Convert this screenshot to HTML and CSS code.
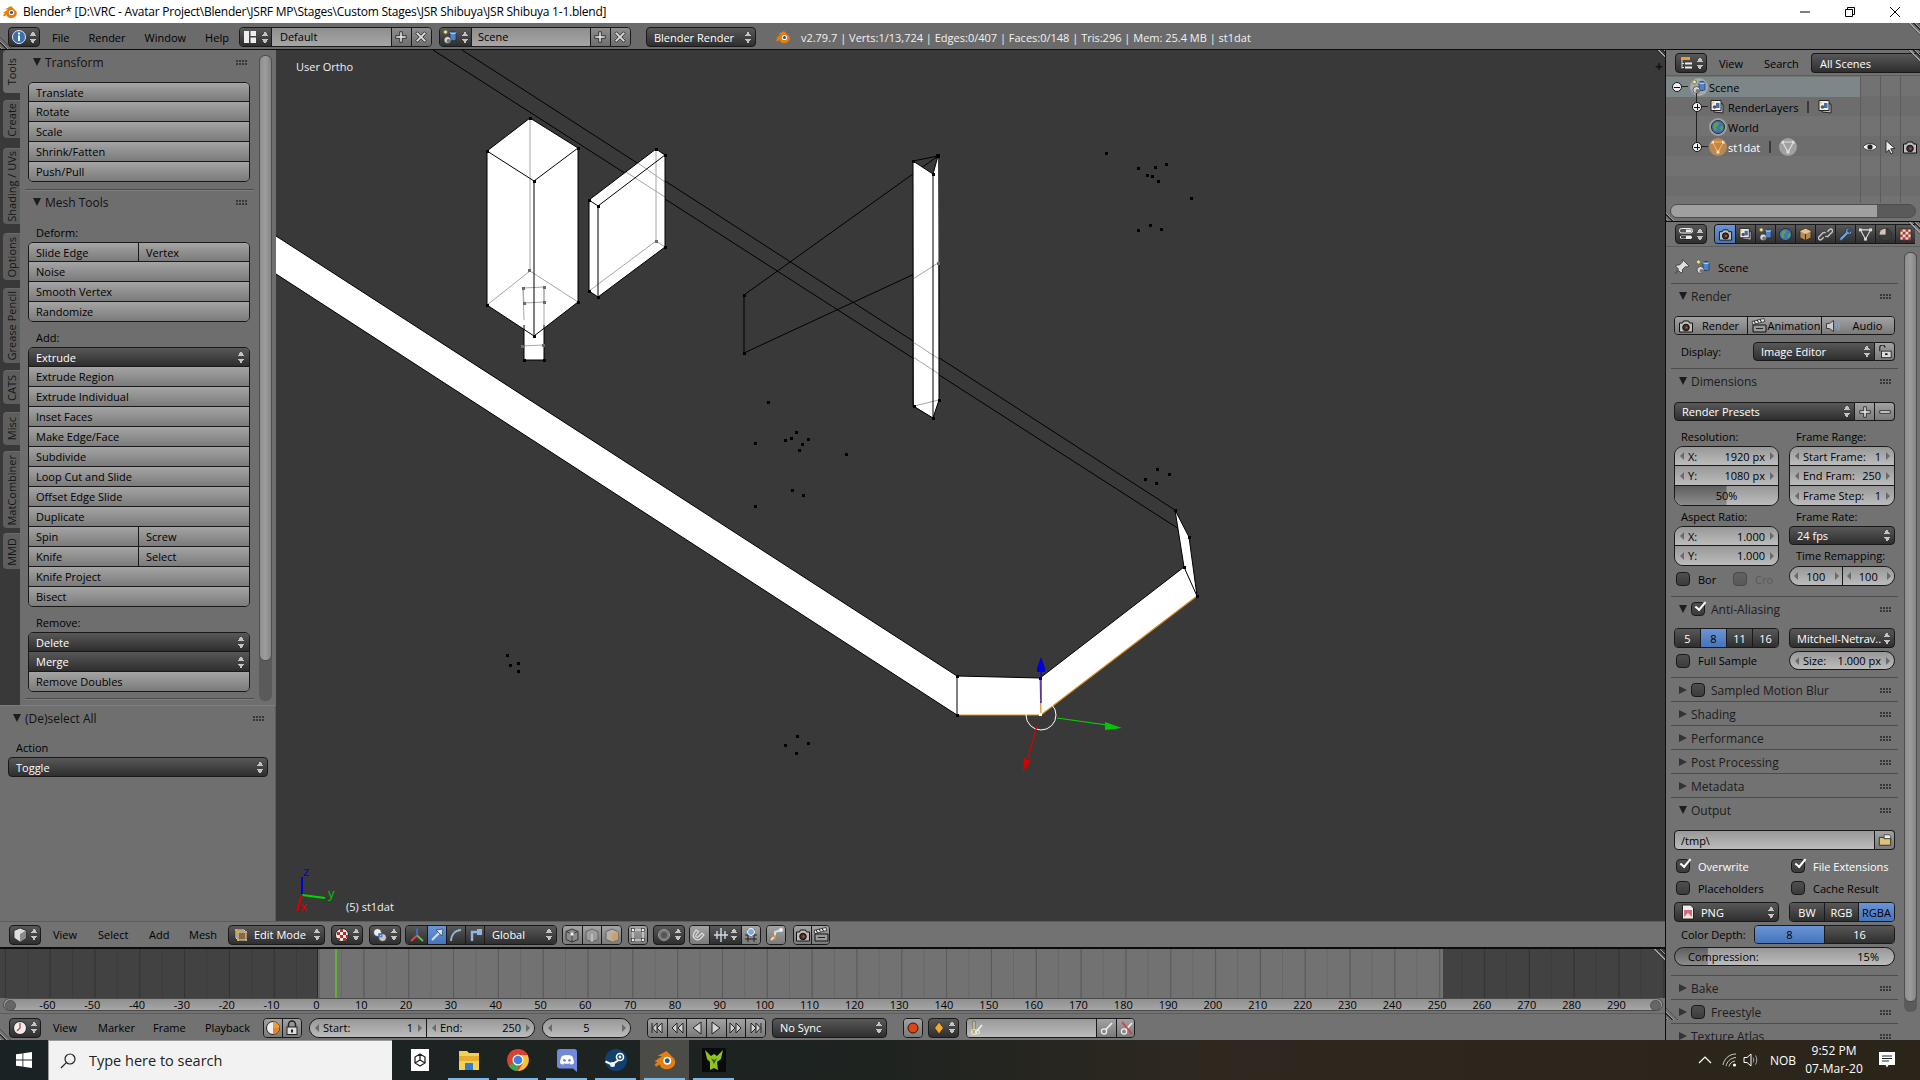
FILE: index.html
```html
<!DOCTYPE html>
<html lang="en">
<head>
    <meta charset="UTF-8">
    <title>Blender</title>
    <link rel="stylesheet" href="styles.css">
</head>
<body>

<svg class="icon-defs" width="0" height="0">
    <defs>
        <symbol id="i-blender" viewBox="0 0 16 16"><path d="M1 9l5-3.600-3-.1L9 2l1 1 4 4c1.500 2 1 5-2 6.500S5 14 4.500 11L2 12.500 1 11l2-1.500z" fill="#e87d0d"/><circle cx="9.500" cy="8.500" r="2.600" fill="#fff"/><circle cx="9.500" cy="8.500" r="1.600" fill="#265787"/></symbol>
        <symbol id="i-info" viewBox="0 0 16 16"><circle cx="8" cy="8" r="6.500" fill="#3a6fb0" stroke="#dfe8f2"/><rect x="7" y="6.500" width="2" height="5.500" fill="#fff"/><rect x="7" y="3.500" width="2" height="2" fill="#fff"/></symbol>
        <symbol id="i-layout" viewBox="0 0 16 16"><path d="M2 2h5v12H2zM8.500 2H14v5H8.500zM8.500 8.500H14V14H8.500z" fill="#eee"/></symbol>
        <symbol id="i-scene" viewBox="0 0 16 16"><circle cx="3.500" cy="3" r="2" fill="#f2e38c" stroke="#6a6a3c" stroke-width=".8"/><path d="M8 3.500c0-1.500 6-1.500 6 0v7c0 1.500-6 1.500-6 0z" fill="#4d83c7" stroke="#16243a" stroke-width=".6"/><path d="M8 3.500c0 1.500 6 1.500 6 0" fill="none" stroke="#bcd6f2"/><circle cx="5.500" cy="11" r="3.500" fill="#d8d8d8" stroke="#222" stroke-width=".6"/><circle cx="6.500" cy="12" r="2" fill="#777"/></symbol>
        <symbol id="i-plus" viewBox="0 0 16 16"><path d="M6.500 2h3v4.500H14v3H9.500V14h-3V9.500H2v-3h4.500z" fill="#ddd" stroke="#222"/></symbol>
        <symbol id="i-minus" viewBox="0 0 16 16"><path d="M2 6.500h12v3H2z" fill="#ddd" stroke="#222"/></symbol>
        <symbol id="i-x" viewBox="0 0 16 16"><path d="M4 2l4 4 4-4 2 2-4 4 4 4-2 2-4-4-4 4-2-2 4-4-4-4z" fill="#ddd" stroke="#222"/></symbol>
        <symbol id="i-cam" viewBox="0 0 16 16"><path d="M1.500 5h3l1-2h5l1 2h3v9h-13z" fill="#bdbdbd" stroke="#111"/><circle cx="8" cy="9.500" r="3.300" fill="#333" stroke="#111"/><circle cx="8.500" cy="9.500" r="1.200" fill="#d23b2e"/></symbol>
        <symbol id="i-outliner" viewBox="0 0 16 16"><path d="M3 2h9v3H3z" fill="#f09a30"/><path d="M4 5v8.500M4 8.500h2M4 12.500h2" stroke="#ddd" fill="none"/><path d="M7 7.500h7v2H7zM7 11.500h7v2H7z" fill="#eee"/></symbol>
        <symbol id="i-props" viewBox="0 0 16 16"><rect x="1.500" y="2.500" width="13" height="4.500" rx="2" fill="#555" stroke="#eee"/><rect x="8" y="3.500" width="5.500" height="2.500" fill="#eee"/><rect x="1.500" y="9" width="13" height="4.500" rx="2" fill="#eee" stroke="#222"/><rect x="3" y="10" width="5" height="2.500" fill="#444"/></symbol>
        <symbol id="i-layers" viewBox="0 0 16 16"><path d="M5 4l9 1v9l-9-1z" fill="#bbb" stroke="#222"/><path d="M2 1.500h10v10H2z" fill="#eee" stroke="#222"/><path d="M7 4h3.500v5H7z" fill="#3d6fb4"/><circle cx="5.500" cy="8" r="1.800" fill="#555"/><circle cx="4" cy="3.800" r="1" fill="#e7c94c"/></symbol>
        <symbol id="i-world" viewBox="0 0 16 16"><circle cx="8" cy="8" r="6.500" fill="#3f76b1" stroke="#1c2a3a"/><path d="M4 5c2-2 4-2 5-1l-1 3-2 1 1 3-2 1-2-4zM10 8l3-1 0 3-2 2z" fill="#5f9e4a"/></symbol>
        <symbol id="i-object" viewBox="0 0 16 16"><path d="M8 1.500l6 3v7l-6 3-6-3v-7z" fill="#b58a55" stroke="#332414"/><path d="M2 4.500l6 3 6-3-6-3z" fill="#e6c493"/><path d="M8 7.500v7" stroke="#332414"/></symbol>
        <symbol id="i-link" viewBox="0 0 16 16"><path d="M6 11L3.500 13.500A2 2 0 0 1 1.500 10L5 6.500c1-1 2.500-1 3 0M10 5l2.500-2.500A2 2 0 0 1 14.500 6L11 9.500c-1 1-2.500 1-3 0" fill="none" stroke="#c8c8c8" stroke-width="1.500"/></symbol>
        <symbol id="i-wrench" viewBox="0 0 16 16"><path d="M14.500 3.500L12 6l-2-2 2.500-2.500c-2.500-1-5 1-4.200 4L2 11.800c-1.200 1.500.7 3.300 2.200 2.200l6.300-6.300c3 .8 5-1.700 4-4.200z" fill="#6d9fd8" stroke="#1d2b3d" stroke-width=".7"/></symbol>
        <symbol id="i-mesh" viewBox="0 0 16 16"><path d="M2.500 3h11L8 13z" fill="none" stroke="#ddd" stroke-width="1.200"/><rect x="1" y="1.500" width="3" height="3" fill="#ddd"/><rect x="12" y="1.500" width="3" height="3" fill="#ddd"/><rect x="6.500" y="11.500" width="3" height="3" fill="#ddd"/></symbol>
        <symbol id="i-mesh-o" viewBox="0 0 16 16"><path d="M2.500 3h11L8 13z" fill="none" stroke="#e8760f" stroke-width="1.800"/><path d="M2.500 3h11L8 13z" fill="none" stroke="#fbe7c8" stroke-width=".6"/><rect x="1" y="1.500" width="3" height="3" fill="#f4e0c0"/><rect x="12" y="1.500" width="3" height="3" fill="#f4e0c0"/><rect x="6.500" y="11.500" width="3" height="3" fill="#f4e0c0"/></symbol>
        <symbol id="i-mat" viewBox="0 0 16 16"><circle cx="8" cy="8" r="6.500" fill="#a5776a" stroke="#222"/><path d="M8 1.500a6.500 6.500 0 0 1 0 13 6.500 6.500 0 0 1-6.500-6.500H8z" fill="#3b3b3b"/><path d="M1.500 8A6.500 6.500 0 0 1 8 1.500V8z" fill="#d6c4bc"/></symbol>
        <symbol id="i-tex" viewBox="0 0 16 16"><rect x="2" y="2" width="12" height="12" fill="#e8e0d8" stroke="#222"/><path d="M2 2h3v3H2zM8 2h3v3H8zM5 5h3v3H5zM11 5h3v3h-3zM2 8h3v3H2zM8 8h3v3H8zM5 11h3v3H5zM11 11h3v3h-3z" fill="#b03a2e"/></symbol>
        <symbol id="i-eye" viewBox="0 0 16 16"><path d="M1 8c3-4.500 11-4.500 14 0-3 4.500-11 4.500-14 0z" fill="#eee" stroke="#222" stroke-width=".7"/><circle cx="8" cy="8" r="2.600" fill="#222"/></symbol>
        <symbol id="i-cursor" viewBox="0 0 16 16"><path d="M4 1.500l9 8-4.200.3L11 14l-2 1-2-4.200L4 13.500z" fill="#eee" stroke="#111" stroke-width=".8"/></symbol>
        <symbol id="i-pin" viewBox="0 0 16 16"><path d="M9 1l6 6-2 1-1.500-.5-3 3 0 3-1.500.5-2.500-2.500L1.500 15 1 14.500l3.500-4.500L2 7.500l.5-1.500 3 0 3-3L8 1.500z" fill="#ddd" stroke="#222" stroke-width=".7"/></symbol>
        <symbol id="i-anim" viewBox="0 0 16 16"><path d="M2 7h13v7H2z" fill="#999" stroke="#111"/><path d="M1 3.500l12-3 .8 3-12 3z" fill="#eee" stroke="#111" stroke-width=".7"/><path d="M3 3l1.500 2.500M6 2l1.500 2.500M9 1.500l1.500 2.500" stroke="#111"/><path d="M5 10.500h7" stroke="#222"/></symbol>
        <symbol id="i-audio" viewBox="0 0 16 16"><path d="M1.500 5.500h3l4-3v11l-4-3h-3z" fill="#ccc" stroke="#222" stroke-width=".8"/><path d="M10.500 5.500c1.200 1.500 1.200 3.500 0 5M12.500 3.500c2.200 2.700 2.200 6.300 0 9" fill="none" stroke="#7ea6d6" stroke-width="1.100"/></symbol>
        <symbol id="i-lock" viewBox="0 0 16 16"><path d="M4.500 7V4.500a3.500 3.500 0 0 1 7 0V7" fill="none" stroke="#222" stroke-width="1.500"/><rect x="3" y="7" width="10" height="7.500" fill="#ddd" stroke="#222"/><rect x="7" y="9.500" width="2" height="3" fill="#222"/></symbol>
        <symbol id="i-unlock" viewBox="0 0 16 16"><path d="M2 7V3a3 3 0 0 1 6 0" fill="none" stroke="#222" stroke-width="1.300"/><rect x="4" y="7" width="11" height="7.500" fill="#ddd" stroke="#222"/><rect x="8" y="9.500" width="3" height="2" fill="#222"/></symbol>
        <symbol id="i-folder" viewBox="0 0 16 16"><path d="M7 2h6l1.500 2v4H7z" fill="#eee" stroke="#222" stroke-width=".8"/><path d="M1.500 5H6l1 1.500h7.500V14h-13z" fill="#d9c27a" stroke="#222"/></symbol>
        <symbol id="i-png" viewBox="0 0 16 16"><path d="M2.500 1h8l3 3v11h-11z" fill="#eee" stroke="#222"/><path d="M4 6h8v7H4z" fill="#d56a7d"/><path d="M4 13l4-4 4 4z" fill="#ffe2d6"/></symbol>
        <symbol id="i-cube" viewBox="0 0 16 16"><path d="M8 1l6 2.500V11l-6 4-6-4V3.500z" fill="#ddd" stroke="#222" stroke-width=".8"/><path d="M8 7v8l6-4V3.500z" fill="#8b8b8b"/></symbol>
        <symbol id="i-edit" viewBox="0 0 16 16"><path d="M3 3h8l2 2v8H5l-2-2z" fill="#8a6a3a" stroke="#ddd"/><path d="M3 3l2 2h8M5 5v8" stroke="#ddd" fill="none"/><path d="M2 2h2v2H2zM12 4h2v2h-2zM4 12h2v2H4zM12 12h2v2h-2zM4 4h2v2H4z" fill="#f5a52c"/></symbol>
        <symbol id="i-pivot" viewBox="0 0 16 16"><circle cx="8" cy="8" r="6.500" fill="#eee" stroke="#222"/><path d="M3 5h3v3H3zM6 2h3v3H6zM9 5h3v3H9zM6 8h3v3H6zM3 11h3v2H3zM9 11h3v3H9zM12 8h2v3h-2z" fill="#c5281f"/></symbol>
        <symbol id="i-shade" viewBox="0 0 16 16"><circle cx="5.500" cy="5.500" r="4" fill="#eee" stroke="#222" stroke-width=".7"/><circle cx="10.500" cy="10.500" r="4" fill="#c9c9c9" stroke="#222" stroke-width=".7"/><rect x="6.800" y="6.800" width="3" height="3" fill="none" stroke="#3a7ad0" stroke-width="1.200"/></symbol>
        <symbol id="i-axes" viewBox="0 0 16 16"><path d="M8 8.500V1.500" stroke="#3e6fe0" stroke-width="1.700"/><path d="M8 8.500L14 14" stroke="#6ac24a" stroke-width="1.700"/><path d="M8 8.500L2 14" stroke="#e0483c" stroke-width="1.700"/></symbol>
        <symbol id="i-move" viewBox="0 0 16 16"><path d="M3 13L11 5" stroke="#cfe0f6" stroke-width="2"/><path d="M14 2l-1 7-6-6z" fill="#cfe0f6" stroke="#16243a" stroke-width=".6"/></symbol>
        <symbol id="i-rot" viewBox="0 0 16 16"><path d="M3 14C3 8 7 3 13 3" fill="none" stroke="#8fb6e0" stroke-width="1.800"/></symbol>
        <symbol id="i-scale" viewBox="0 0 16 16"><path d="M5 14V5h6" fill="none" stroke="#8fb6e0" stroke-width="2.400"/><rect x="10" y="2" width="5" height="6" fill="#8fb6e0"/></symbol>
        <symbol id="i-vert" viewBox="0 0 16 16"><path d="M8 2l6 2.500v8L8 15l-6-2.500v-8z" fill="#8a8a8a" stroke="#222" stroke-width=".8"/><path d="M2 4.500L8 7l6-2.500M8 7v8" fill="none" stroke="#222" stroke-width=".7"/><rect x="6.500" y="5.500" width="3" height="3" fill="#eee"/></symbol>
        <symbol id="i-edge" viewBox="0 0 16 16"><path d="M8 2l6 2.500v8L8 15l-6-2.500v-8z" fill="#9d9d9d" stroke="#555" stroke-width=".8"/><path d="M8 7v8" stroke="#ddd"/></symbol>
        <symbol id="i-face" viewBox="0 0 16 16"><path d="M8 2l6 2.500v8L8 15l-6-2.500v-8z" fill="#b8b0a4" stroke="#555" stroke-width=".8"/><path d="M8 7v8l6-2.500v-8z" fill="#caa06c"/></symbol>
        <symbol id="i-occlude" viewBox="0 0 16 16"><rect x="3" y="3" width="10" height="10" fill="none" stroke="#eee"/><rect x="1.500" y="1.500" width="3" height="3" fill="#eee" stroke="#222" stroke-width=".6"/><rect x="11.500" y="1.500" width="3" height="3" fill="#eee" stroke="#222" stroke-width=".6"/><rect x="1.500" y="11.500" width="3" height="3" fill="#eee" stroke="#222" stroke-width=".6"/><rect x="11.500" y="11.500" width="3" height="3" fill="#eee" stroke="#222" stroke-width=".6"/></symbol>
        <symbol id="i-prop" viewBox="0 0 16 16"><circle cx="8" cy="8" r="5.500" fill="#777" stroke="#999"/><circle cx="8" cy="8" r="3" fill="#555"/></symbol>
        <symbol id="i-magnet" viewBox="0 0 16 16"><path d="M5 3L2.500 7c-1.500 3.500 3 7.500 6.500 5l4-4-2-2-4 4c-1.300 1-3-.5-2-2l2.500-3.500z" fill="none" stroke="#ddd" stroke-width="1.200"/></symbol>
        <symbol id="i-snap-inc" viewBox="0 0 16 16"><path d="M8 1v14M4 4v8M12 4v8M1 8h14" stroke="#cfd9e6" stroke-width="1.400"/></symbol>
        <symbol id="i-snap-el" viewBox="0 0 16 16"><path d="M2 8h12M2 12h12M5 2v13M11 2v13" stroke="#222"/><circle cx="8" cy="5" r="3.500" fill="#7aa9e0" stroke="#fff"/></symbol>
        <symbol id="i-parents" viewBox="0 0 16 16"><path d="M13 3L7 5v4L3 13" fill="none" stroke="#ddd" stroke-width="2"/><circle cx="13" cy="3" r="2" fill="#eee"/><path d="M3 9h4v4" fill="none" stroke="#d48b2e" stroke-width="1.500"/></symbol>
        <symbol id="i-clock" viewBox="0 0 16 16"><circle cx="8" cy="8" r="6.500" fill="#eee" stroke="#222"/><path d="M8 3v5l-3 3" fill="none" stroke="#c33" stroke-width="1.200"/></symbol>
        <symbol id="i-preview" viewBox="0 0 16 16"><circle cx="8" cy="8" r="6.500" fill="#eee" stroke="#222"/><path d="M8 8V1.500a6.500 6.500 0 0 1 6.500 6.500z" fill="#f09a30"/><path d="M8 8h6.500A6.500 6.500 0 0 1 8 14.500z" fill="#e8822a"/></symbol>
        <symbol id="i-key" viewBox="0 0 16 16"><circle cx="5" cy="11.500" r="2.600" fill="none" stroke="#eee" stroke-width="1.300"/><path d="M7 9.500L13 3" stroke="#eee" stroke-width="1.800"/></symbol>
        <symbol id="i-key-x" viewBox="0 0 16 16"><circle cx="5" cy="11.500" r="2.600" fill="none" stroke="#eee" stroke-width="1.300"/><path d="M7 9.500L13 3" stroke="#eee" stroke-width="1.800"/><path d="M3 2l10 12" stroke="#d63a3a" stroke-width="1.500"/></symbol>
        <symbol id="i-key-set" viewBox="0 0 16 16"><path d="M4 1h2v9H4z" fill="#efe3a0" stroke="#333" stroke-width=".5"/><circle cx="5" cy="12" r="2.500" fill="none" stroke="#efe3a0" stroke-width="1.200"/><path d="M8 11l5-6" stroke="#eee" stroke-width="1.800"/><circle cx="8.500" cy="12" r="2" fill="none" stroke="#eee"/></symbol>
        <symbol id="i-diamond" viewBox="0 0 16 16"><path d="M8 2l4.500 6L8 14 3.500 8z" fill="#f2a826" stroke="#222" stroke-width=".7"/></symbol>
        <symbol id="i-rec" viewBox="0 0 16 16"><circle cx="8" cy="8" r="5" fill="#dd4713" stroke="#3a1306"/></symbol>
        <symbol id="i-start" viewBox="0 0 16 16"><path d="M3 3v10M13 3L8 8l5 5zM8 3L3.500 8 8 13z" fill="#d4d4d4" stroke="#222"/></symbol>
        <symbol id="i-prev" viewBox="0 0 16 16"><path d="M8 3L3 8l5 5zM14 3L9 8l5 5z" fill="#d4d4d4" stroke="#222"/></symbol>
        <symbol id="i-rev" viewBox="0 0 16 16"><path d="M12 2L4 8l8 6z" fill="#d4d4d4" stroke="#222"/></symbol>
        <symbol id="i-play" viewBox="0 0 16 16"><path d="M4 2l8 6-8 6z" fill="#d4d4d4" stroke="#222"/></symbol>
        <symbol id="i-next" viewBox="0 0 16 16"><path d="M2 3l5 5-5 5zM8 3l5 5-5 5z" fill="#d4d4d4" stroke="#222"/></symbol>
        <symbol id="i-end" viewBox="0 0 16 16"><path d="M13 3v10M3 3l5 5-5 5zM8 3l4.500 5L8 13z" fill="#d4d4d4" stroke="#222"/></symbol>
    </defs>
</svg>

<div class="titlebar">
    <svg class="ico title-logo"><use href="#i-blender"/></svg>
    <span class="title-text">Blender* [D:\VRC - Avatar Project\Blender\JSRF MP\Stages\Custom Stages\JSR Shibuya\JSR Shibuya 1-1.blend]</span>
    <div class="win-btns">
        <svg class="win-ico" viewBox="0 0 12 12"><path d="M1 6h10" stroke="#000" fill="none"/></svg>
        <svg class="win-ico" viewBox="0 0 12 12"><path d="M1.500 3.500h7v7h-7zM3.500 3.500v-2h7v7h-2" stroke="#000" fill="none"/></svg>
        <svg class="win-ico" viewBox="0 0 12 12"><path d="M1 1l10 10M11 1L1 11" stroke="#000" fill="none"/></svg>
    </div>
</div>

<div class="infobar">
    <div class="bt-dark icon-drop ib-editor"><svg class="ico"><use href="#i-info"/></svg><span class="ud"></span></div>
    <nav class="menu ib-menu"><span>File</span><span>Render</span><span>Window</span><span>Help</span></nav>
    <div class="id-block ib-layout">
        <div class="bt-dark icon-drop"><svg class="ico"><use href="#i-layout"/></svg><span class="ud"></span></div>
        <div class="id-name">Default</div>
        <div class="id-cell"><svg class="ico"><use href="#i-plus"/></svg></div>
        <div class="id-cell"><svg class="ico"><use href="#i-x"/></svg></div>
    </div>
    <div class="id-block ib-scene">
        <div class="bt-dark icon-drop"><svg class="ico"><use href="#i-scene"/></svg><span class="ud"></span></div>
        <div class="id-name id-name-wide">Scene</div>
        <div class="id-cell"><svg class="ico"><use href="#i-plus"/></svg></div>
        <div class="id-cell"><svg class="ico"><use href="#i-x"/></svg></div>
    </div>
    <div class="bt-dark drop ib-engine"><span>Blender Render</span><span class="ud"></span></div>
    <svg class="ico ib-logo"><use href="#i-blender"/></svg>
    <span class="ib-stats">v2.79.7 | Verts:1/13,724 | Edges:0/407 | Faces:0/148 | Tris:296 | Mem: 25.4 MB | st1dat</span>
    <span class="hatch hatch-tr"></span>
    <span class="hatch hatch-bl"></span>
</div>

<div class="workspace">
    <div class="main-col">
        <div class="view3d">
            <aside class="tool-region">
                <div class="tool-upper">
                    <div class="tabs">
                        <div class="tab tab-on tab-tools"><span>Tools</span></div>
                        <div class="tab tab-create"><span>Create</span></div>
                        <div class="tab tab-shading"><span>Shading / UVs</span></div>
                        <div class="tab tab-options"><span>Options</span></div>
                        <div class="tab tab-grease"><span>Grease Pencil</span></div>
                        <div class="tab tab-cats"><span>CATS</span></div>
                        <div class="tab tab-misc"><span>Misc</span></div>
                        <div class="tab tab-mat"><span>MatCombiner</span></div>
                        <div class="tab tab-mmd"><span>MMD</span></div>
                    </div>
                    <div class="tool-panels">
                        <div class="p-head t-head"><i class="tri-down"></i>Transform<b class="grip"></b></div>
                        <div class="stack t-first">
                            <div class="bt">Translate</div>
                            <div class="bt">Rotate</div>
                            <div class="bt">Scale</div>
                            <div class="bt">Shrink/Fatten</div>
                            <div class="bt">Push/Pull</div>
                        </div>
                        <div class="t-divider"></div>
                        <div class="p-head t-head"><i class="tri-down"></i>Mesh Tools<b class="grip"></b></div>
                        <div class="t-label t-label-first">Deform:</div>
                        <div class="stack">
                            <div class="bt-row">
                                <div class="bt half">Slide Edge</div>
                                <div class="bt">Vertex</div>
                            </div>
                            <div class="bt">Noise</div>
                            <div class="bt">Smooth Vertex</div>
                            <div class="bt">Randomize</div>
                        </div>
                        <div class="t-label">Add:</div>
                        <div class="stack">
                            <div class="bt bt-menu">Extrude<span class="ud"></span></div>
                            <div class="bt">Extrude Region</div>
                            <div class="bt">Extrude Individual</div>
                            <div class="bt">Inset Faces</div>
                            <div class="bt">Make Edge/Face</div>
                            <div class="bt">Subdivide</div>
                            <div class="bt">Loop Cut and Slide</div>
                            <div class="bt">Offset Edge Slide</div>
                            <div class="bt">Duplicate</div>
                            <div class="bt-row">
                                <div class="bt half">Spin</div>
                                <div class="bt">Screw</div>
                            </div>
                            <div class="bt-row">
                                <div class="bt half">Knife</div>
                                <div class="bt">Select</div>
                            </div>
                            <div class="bt">Knife Project</div>
                            <div class="bt">Bisect</div>
                        </div>
                        <div class="t-label">Remove:</div>
                        <div class="stack">
                            <div class="bt bt-menu">Delete<span class="ud"></span></div>
                            <div class="bt bt-menu">Merge<span class="ud"></span></div>
                            <div class="bt">Remove Doubles</div>
                        </div>
                        <div class="t-divider t-divider-end"></div>
                    </div>
                    <div class="tool-scroll"><div class="tool-thumb"></div></div>
                </div>
                <div class="op-panel">
                    <div class="p-head op-head"><i class="tri-down"></i>(De)select All<b class="grip"></b></div>
                    <div class="op-label">Action</div>
                    <div class="bt-dark drop op-toggle"><span>Toggle</span><span class="ud"></span></div>
                </div>
            </aside>

            <div class="viewport">
                <svg class="scene-svg" viewBox="276 50 1389 871" width="1389" height="871">
                    <g class="edges">
                        <path d="M433 50L1179 529M462 50L1175 510M744 295L938 156M744 295V353L938 263"/>
                    </g>
                    <g class="faces">
                        <path d="M530 118L578 148V302L534 336L487 305V151Z"/>
                        <path d="M524 320H544V360H524Z"/>
                        <path d="M656 149L665 155V247L598 297L589 291V200Z"/>
                        <path d="M913 161L933 174L938 156L939 400L933 418L914 406Z"/>
                        <path d="M276 236L957 676L1040 678L1184 567L1197 596L1041 715H957L276 274Z"/>
                        <path d="M1175 510L1189 537L1197 596L1184 567Z"/>
                    </g>
                    <g class="back-edges">
                        <path d="M530 118V271M487 305L530 271L578 302M656 149V241M589 291L656 241L665 247"/>
                        <path d="M523 288L544 287L544 302L524 303ZM523 288L524 320M544 287V325M522 346L543 345"/>
                        <path d="M626 172L665 197M638 163L665 182M913 357L939 374M913 342L939 359M913 279L938 263M914 406L939 400"/>
                    </g>
                    <g class="edges">
                        <path d="M530 118L578 148L534 181L487 151ZM534 181V336M487 151V305L534 336L578 302V148"/>
                        <path d="M524 325V360H544V325"/>
                        <path d="M656 149L665 155L598 206L589 200ZM598 206V297L589 291V200M598 297L665 247V155"/>
                        <path d="M913 161L938 156L933 174ZM913 161V406L933 418V174M933 418L939 400V263"/>
                        <path d="M276 236L957 676M276 274L957 715M957 676V715M957 676L1040 678L1184 567M1175 510L1189 537L1197 596L1184 567L1175 510"/>
                    </g>
                    <g class="selected">
                        <path d="M957 715H1041L1197 596M1040 678L1041 715"/>
                    </g>
                    <g class="verts">
                        <path d="M529 117h3v3h-3zM577 147h3v3h-3zM533 180h3v3h-3zM486 150h3v3h-3zM486 304h3v3h-3zM577 301h3v3h-3zM533 335h3v3h-3zM523 359h3v3h-3zM543 359h3v3h-3zM655 148h3v3h-3zM664 154h3v3h-3zM588 199h3v3h-3zM597 205h3v3h-3zM597 296h3v3h-3zM588 290h3v3h-3zM664 246h3v3h-3zM912 160h3v3h-3zM936 154h4v4h-4zM932 173h3v3h-3zM913 405h3v3h-3zM938 399h3v3h-3zM932 417h3v3h-3zM743 294h3v3h-3zM743 352h3v3h-3zM956 675h3v3h-3zM956 714h3v3h-3zM1039 677h3v3h-3zM1174 509h3v3h-3zM1188 536h3v3h-3zM1196 595h3v3h-3zM1183 566h3v3h-3z"/>
                        <path d="M1105 152h3v3h-3zM1137 167h3v3h-3zM1146 174h3v3h-3zM1154 166h3v3h-3zM1165 163h3v3h-3zM1157 180h3v3h-3zM1151 175h3v3h-3zM1190 197h3v3h-3zM1137 229h3v3h-3zM1149 224h3v3h-3zM1160 228h3v3h-3z"/>
                        <path d="M767 401h3v3h-3zM754 442h3v3h-3zM784 439h3v3h-3zM790 437h3v3h-3zM795 431h3v3h-3zM798 449h3v3h-3zM801 443h3v3h-3zM807 438h3v3h-3zM845 453h3v3h-3zM791 489h3v3h-3zM802 494h3v3h-3zM754 505h3v3h-3z"/>
                        <path d="M1144 478h3v3h-3zM1156 468h3v3h-3zM1155 482h3v3h-3zM1168 473h3v3h-3z"/>
                        <path d="M506 654h3v3h-3zM509 664h3v3h-3zM517 662h3v3h-3zM517 670h3v3h-3z"/>
                        <path d="M796 735h3v3h-3zM784 744h3v3h-3zM807 742h3v3h-3zM795 752h3v3h-3z"/>
                    </g>
                    <g class="back-verts">
                        <path d="M528 269h3v3h-3zM522 287h3v3h-3zM543 286h3v3h-3zM523 302h3v3h-3zM543 301h3v3h-3zM521 345h3v3h-3zM542 344h3v3h-3zM655 240h3v3h-3zM937 262h3v3h-3z"/>
                    </g>
                    <circle class="gizmo-ring" cx="1041" cy="715" r="15"/>
                    <path class="gizmo-b" d="M1041 703V668"/>
                    <path class="gizmo-fb" d="M1041 657L1045 668L1045 672H1037V668Z"/>
                    <path class="gizmo-g" d="M1057 718L1107 725"/>
                    <path class="gizmo-fg" d="M1122 728L1105 722L1105 730Z"/>
                    <path class="gizmo-r" d="M1037 726L1028 758"/>
                    <path class="gizmo-fr" d="M1023 772L1024 758L1031 761Z"/>
                    <rect class="gizmo-dot" x="1039" y="713" width="3" height="3"/>
                    <path class="axis-b" d="M302 895V877"/>
                    <path class="axis-g" d="M302 895L325 898"/>
                    <path class="axis-r" d="M302 895L297 911"/>
                    <text class="axis-tb" x="303" y="876">z</text>
                    <text class="axis-tg" x="328" y="898">y</text>
                    <text class="axis-tr" x="300" y="911">x</text>
                </svg>
                <span class="view-name">User Ortho</span>
                <span class="view-obj">(5) st1dat</span>
                <b class="view-plus">+</b>
                <span class="hatch hatch-tr"></span>
            </div>
        </div>

        <div class="view-header">
            <div class="bt-dark icon-drop h-editor"><svg class="ico"><use href="#i-cube"/></svg><span class="ud"></span></div>
            <nav class="menu h-menu"><span>View</span><span>Select</span><span>Add</span><span>Mesh</span></nav>
            <div class="bt-dark drop h-mode"><svg class="ico"><use href="#i-edit"/></svg><span class="drop-text">Edit Mode</span><span class="ud"></span></div>
            <div class="bt-dark icon-drop h-pivot"><svg class="ico"><use href="#i-pivot"/></svg><span class="ud"></span></div>
            <div class="bt-dark icon-drop h-shade"><svg class="ico"><use href="#i-shade"/></svg><span class="ud"></span></div>
            <div class="cells h-manip">
                <div class="cell cell-d cell-axes"><svg class="ico"><use href="#i-axes"/></svg></div>
                <div class="cell cell-on"><svg class="ico"><use href="#i-move"/></svg></div>
                <div class="cell cell-d"><svg class="ico"><use href="#i-rot"/></svg></div>
                <div class="cell cell-d"><svg class="ico"><use href="#i-scale"/></svg></div>
                <div class="cell cell-d cell-global"><span>Global</span><span class="ud"></span></div>
            </div>
            <div class="cells h-select">
                <div class="cell"><svg class="ico"><use href="#i-vert"/></svg></div>
                <div class="cell"><svg class="ico"><use href="#i-edge"/></svg></div>
                <div class="cell"><svg class="ico"><use href="#i-face"/></svg></div>
            </div>
            <div class="cells h-occl"><div class="cell"><svg class="ico"><use href="#i-occlude"/></svg></div></div>
            <div class="bt-dark icon-drop h-prop"><svg class="ico"><use href="#i-prop"/></svg><span class="ud"></span></div>
            <div class="cells h-snap">
                <div class="cell"><svg class="ico"><use href="#i-magnet"/></svg></div>
                <div class="cell cell-d cell-inc"><svg class="ico"><use href="#i-snap-inc"/></svg><span class="ud"></span></div>
                <div class="cell"><svg class="ico"><use href="#i-snap-el"/></svg></div>
            </div>
            <div class="cells h-parent"><div class="cell"><svg class="ico"><use href="#i-parents"/></svg></div></div>
            <div class="cells h-gl">
                <div class="cell"><svg class="ico"><use href="#i-cam"/></svg></div>
                <div class="cell"><svg class="ico"><use href="#i-anim"/></svg></div>
            </div>
        </div>

        <div class="timeline">
            <div class="tl-grid">
                <div class="tl-out tl-before"></div>
                <div class="tl-out tl-after"></div>
                <div class="tl-frame"></div>
                <span class="hatch hatch-tr"></span>
            </div>
            <div class="ruler">
                <span>-60</span><span>-50</span><span>-40</span><span>-30</span><span>-20</span><span>-10</span>
                <span>0</span><span>10</span><span>20</span><span>30</span><span>40</span><span>50</span>
                <span>60</span><span>70</span><span>80</span><span>90</span><span>100</span><span>110</span>
                <span>120</span><span>130</span><span>140</span><span>150</span><span>160</span><span>170</span>
                <span>180</span><span>190</span><span>200</span><span>210</span><span>220</span><span>230</span>
                <span>240</span><span>250</span><span>260</span><span>270</span><span>280</span><span>290</span>
            </div>
        </div>

        <div class="tl-footer">
            <div class="bt-dark icon-drop h-editor"><svg class="ico"><use href="#i-clock"/></svg><span class="ud"></span></div>
            <nav class="menu f-menu"><span>View</span><span>Marker</span><span>Frame</span><span>Playback</span></nav>
            <div class="cells f-preview">
                <div class="cell"><svg class="ico"><use href="#i-preview"/></svg></div>
                <div class="cell"><svg class="ico"><use href="#i-lock"/></svg></div>
            </div>
            <div class="num-pair f-range">
                <div class="num num-start"><i class="al"></i><span>Start:</span><span class="num-val">1</span><i class="ar"></i></div>
                <div class="num num-end"><i class="al"></i><span>End:</span><span class="num-val">250</span><i class="ar"></i></div>
            </div>
            <div class="num-pair f-current">
                <div class="num num-one"><i class="al"></i><span class="num-mid">5</span><i class="ar"></i></div>
            </div>
            <div class="cells f-transport">
                <div class="cell"><svg class="ico"><use href="#i-start"/></svg></div>
                <div class="cell"><svg class="ico"><use href="#i-prev"/></svg></div>
                <div class="cell"><svg class="ico"><use href="#i-rev"/></svg></div>
                <div class="cell"><svg class="ico"><use href="#i-play"/></svg></div>
                <div class="cell"><svg class="ico"><use href="#i-next"/></svg></div>
                <div class="cell"><svg class="ico"><use href="#i-end"/></svg></div>
            </div>
            <div class="bt-dark drop f-sync"><span>No Sync</span><span class="ud"></span></div>
            <div class="cells f-rec"><div class="cell"><svg class="ico"><use href="#i-rec"/></svg></div></div>
            <div class="bt-dark icon-drop f-keytype"><svg class="ico"><use href="#i-diamond"/></svg><span class="ud"></span></div>
            <div class="cells f-keys">
                <div class="cell cell-keyset"><svg class="ico"><use href="#i-key-set"/></svg></div>
                <div class="cell"><svg class="ico"><use href="#i-key"/></svg></div>
                <div class="cell"><svg class="ico"><use href="#i-key-x"/></svg></div>
            </div>
            <span class="hatch hatch-bl"></span>
        </div>
    </div>

    <div class="side-col">
        <div class="outliner">
            <div class="out-head">
                <div class="bt-dark icon-drop"><svg class="ico"><use href="#i-outliner"/></svg><span class="ud"></span></div>
                <nav class="menu out-menu"><span>View</span><span>Search</span></nav>
                <div class="bt-dark out-scenes"><span>All Scenes</span></div>
                <span class="hatch hatch-tr"></span>
            </div>
            <div class="out-list">
                <div class="out-cols"><i></i><i></i><i></i></div>
                <div class="out-row out-row-sel">
                    <i class="exp exp-minus"></i>
                    <svg class="ico ico-ring"><use href="#i-scene"/></svg>
                    <span>Scene</span>
                </div>
                <div class="out-tree"></div>
                <div class="out-row out-row-2">
                    <i class="exp"></i>
                    <svg class="ico"><use href="#i-layers"/></svg>
                    <span>RenderLayers</span>
                    <b class="out-sep"></b>
                    <svg class="ico"><use href="#i-layers"/></svg>
                </div>
                <div class="out-row out-row-3">
                    <svg class="ico ico-ring"><use href="#i-world"/></svg>
                    <span>World</span>
                </div>
                <div class="out-row out-row-2 out-row-obj">
                    <i class="exp"></i>
                    <svg class="ico ico-ring-o"><use href="#i-mesh-o"/></svg>
                    <span class="out-active">st1dat</span>
                    <b class="out-sep"></b>
                    <svg class="ico ico-ring-g"><use href="#i-mesh"/></svg>
                    <div class="out-restrict">
                        <svg class="ico"><use href="#i-eye"/></svg>
                        <svg class="ico"><use href="#i-cursor"/></svg>
                        <svg class="ico"><use href="#i-cam"/></svg>
                    </div>
                </div>
            </div>
            <div class="out-scroll"><div class="out-thumb"></div><span class="hatch hatch-bl"></span></div>
        </div>

        <div class="props">
            <div class="props-head">
                <div class="bt-dark icon-drop"><svg class="ico"><use href="#i-props"/></svg><span class="ud"></span></div>
                <div class="ctx-tabs">
                    <div class="cell cell-d cell-on"><svg class="ico"><use href="#i-cam"/></svg></div>
                    <div class="cell cell-d"><svg class="ico"><use href="#i-layers"/></svg></div>
                    <div class="cell cell-d"><svg class="ico"><use href="#i-scene"/></svg></div>
                    <div class="cell cell-d"><svg class="ico"><use href="#i-world"/></svg></div>
                    <div class="cell cell-d"><svg class="ico"><use href="#i-object"/></svg></div>
                    <div class="cell cell-d"><svg class="ico"><use href="#i-link"/></svg></div>
                    <div class="cell cell-d"><svg class="ico"><use href="#i-wrench"/></svg></div>
                    <div class="cell cell-d"><svg class="ico"><use href="#i-mesh"/></svg></div>
                    <div class="cell cell-d"><svg class="ico"><use href="#i-mat"/></svg></div>
                    <div class="cell cell-d"><svg class="ico"><use href="#i-tex"/></svg></div>
                </div>
                <span class="hatch hatch-tr"></span>
            </div>
            <div class="props-main">
                <div class="props-body">
                    <div class="ctx">
                        <svg class="ico"><use href="#i-pin"/></svg>
                        <svg class="ico"><use href="#i-scene"/></svg>
                        <span>Scene</span>
                    </div>

                    <div class="p-head pr-head"><i class="tri-down"></i>Render<b class="grip"></b></div>
                    <div class="render-btns">
                        <div class="rb"><svg class="ico"><use href="#i-cam"/></svg><span>Render</span></div>
                        <div class="rb"><svg class="ico"><use href="#i-anim"/></svg><span>Animation</span></div>
                        <div class="rb"><svg class="ico"><use href="#i-audio"/></svg><span>Audio</span></div>
                    </div>
                    <div class="display-row">
                        <span class="lbl">Display:</span>
                        <div class="display-drop">
                            <div class="bt-dark drop"><span>Image Editor</span><span class="ud"></span></div>
                            <div class="end-cell"><svg class="ico"><use href="#i-unlock"/></svg></div>
                        </div>
                    </div>

                    <div class="p-head pr-head"><i class="tri-down"></i>Dimensions<b class="grip"></b></div>
                    <div class="presets">
                        <div class="bt-dark drop"><span>Render Presets</span><span class="ud"></span></div>
                        <div class="end-cell"><svg class="ico"><use href="#i-plus"/></svg></div>
                        <div class="end-cell"><svg class="ico"><use href="#i-minus"/></svg></div>
                    </div>
                    <div class="dim-grid">
                        <div>
                            <div class="lbl lbl-row">Resolution:</div>
                            <div class="stack">
                                <div class="num"><i class="al"></i><span>X:</span><span class="num-val">1920 px</span><i class="ar"></i></div>
                                <div class="num"><i class="al"></i><span>Y:</span><span class="num-val">1080 px</span><i class="ar"></i></div>
                                <div class="slider slider-half"><span>50%</span></div>
                            </div>
                            <div class="lbl lbl-row lbl-gap">Aspect Ratio:</div>
                            <div class="stack">
                                <div class="num"><i class="al"></i><span>X:</span><span class="num-val">1.000</span><i class="ar"></i></div>
                                <div class="num"><i class="al"></i><span>Y:</span><span class="num-val">1.000</span><i class="ar"></i></div>
                            </div>
                            <div class="check-pair">
                                <label class="chk"><i class="box"></i><span>Bor</span></label>
                                <label class="chk chk-off"><i class="box"></i><span>Cro</span></label>
                            </div>
                        </div>
                        <div>
                            <div class="lbl lbl-row">Frame Range:</div>
                            <div class="stack">
                                <div class="num"><i class="al"></i><span>Start Frame:</span><span class="num-val">1</span><i class="ar"></i></div>
                                <div class="num"><i class="al"></i><span>End Fram:</span><span class="num-val">250</span><i class="ar"></i></div>
                                <div class="num"><i class="al"></i><span>Frame Step:</span><span class="num-val">1</span><i class="ar"></i></div>
                            </div>
                            <div class="lbl lbl-row lbl-gap">Frame Rate:</div>
                            <div class="bt-dark drop drop-block"><span>24 fps</span><span class="ud"></span></div>
                            <div class="lbl lbl-remap">Time Remapping:</div>
                            <div class="num-pair remap">
                                <div class="num"><i class="al"></i><span class="num-mid">100</span><i class="ar"></i></div>
                                <div class="num"><i class="al"></i><span class="num-mid">100</span><i class="ar"></i></div>
                            </div>
                        </div>
                    </div>

                    <div class="p-head pr-head"><i class="tri-down"></i><i class="box box-on"></i>Anti-Aliasing<b class="grip"></b></div>
                    <div class="aa-grid">
                        <div class="cells aa-samples">
                            <div class="cell cell-d">5</div>
                            <div class="cell cell-d cell-on">8</div>
                            <div class="cell cell-d">11</div>
                            <div class="cell cell-d">16</div>
                        </div>
                        <div class="bt-dark drop drop-block"><span>Mitchell-Netrav..</span><span class="ud"></span></div>
                        <label class="chk"><i class="box"></i><span>Full Sample</span></label>
                        <div class="num num-round"><i class="al"></i><span>Size:</span><span class="num-val">1.000 px</span><i class="ar"></i></div>
                    </div>

                    <div class="p-head pr-head"><i class="tri-right"></i><i class="box"></i>Sampled Motion Blur<b class="grip"></b></div>
                    <div class="p-head pr-head"><i class="tri-right"></i>Shading<b class="grip"></b></div>
                    <div class="p-head pr-head"><i class="tri-right"></i>Performance<b class="grip"></b></div>
                    <div class="p-head pr-head"><i class="tri-right"></i>Post Processing<b class="grip"></b></div>
                    <div class="p-head pr-head"><i class="tri-right"></i>Metadata<b class="grip"></b></div>
                    <div class="p-head pr-head"><i class="tri-down"></i>Output<b class="grip"></b></div>

                    <div class="path-row">
                        <div class="path-field">/tmp\</div>
                        <div class="end-cell"><svg class="ico"><use href="#i-folder"/></svg></div>
                    </div>
                    <div class="out-checks">
                        <label class="chk chk-lit"><i class="box box-on"></i><span>Overwrite</span></label>
                        <label class="chk chk-lit"><i class="box box-on"></i><span>File Extensions</span></label>
                        <label class="chk"><i class="box"></i><span>Placeholders</span></label>
                        <label class="chk"><i class="box"></i><span>Cache Result</span></label>
                    </div>
                    <div class="format-row">
                        <div class="bt-dark drop"><svg class="ico"><use href="#i-png"/></svg><span class="drop-text">PNG</span><span class="ud"></span></div>
                        <div class="cells color-modes">
                            <div class="cell cell-d">BW</div>
                            <div class="cell cell-d">RGB</div>
                            <div class="cell cell-d cell-on">RGBA</div>
                        </div>
                    </div>
                    <div class="depth-row">
                        <span class="lbl">Color Depth:</span>
                        <div class="cells depth-cells">
                            <div class="cell cell-d cell-on">8</div>
                            <div class="cell cell-d">16</div>
                        </div>
                    </div>
                    <div class="compress"><span>Compression:</span><span>15%</span></div>

                    <div class="p-head pr-head pr-last"><i class="tri-right"></i>Bake<b class="grip"></b></div>
                    <div class="p-head pr-head"><i class="tri-right"></i><i class="box"></i>Freestyle<b class="grip"></b></div>
                    <div class="p-head pr-head"><i class="tri-right"></i>Texture Atlas<b class="grip"></b></div>
                </div>
                <div class="props-scroll"><div class="props-thumb"></div></div>
            </div>
            <span class="hatch hatch-bl"></span>
        </div>
    </div>
</div>

<footer class="taskbar">
    <svg class="tb-start" viewBox="0 0 16 16"><path d="M0 2.300L6.500 1.400V7.600H0zM7.300 1.300L16 0V7.600H7.300zM0 8.400H6.500V14.600L0 13.700zM7.300 8.400H16V16L7.300 14.700z" fill="#fff"/></svg>
    <div class="tb-search">
        <svg class="tb-lens" viewBox="0 0 16 16"><circle cx="10" cy="6" r="5" fill="none" stroke="#222" stroke-width="1.200"/><path d="M6.300 9.700L1 15" stroke="#222" stroke-width="1.200"/></svg>
        <span>Type here to search</span>
    </div>
    <div class="tb-apps">
        <div class="tb-app">
            <svg class="tb-ico" viewBox="0 0 24 24"><rect x="3" y="1" width="18" height="22" fill="#fff"/><path d="M12 6l5 3v6l-5 3-5-3V9zM12 6v6m0 0l5 3m-5-3l-5 3" fill="none" stroke="#222" stroke-width="1.300"/></svg>
        </div>
        <div class="tb-app tb-open">
            <svg class="tb-ico" viewBox="0 0 24 24"><path d="M2 3h8l2 2h10v17H2z" fill="#f6cf55"/><path d="M2 8h20v5H2z" fill="#e8ad2d"/><path d="M8 15h8v7H8z" fill="#2f7fc9"/></svg>
        </div>
        <div class="tb-app tb-open">
            <svg class="tb-ico" viewBox="0 0 24 24"><circle cx="12" cy="12" r="11" fill="#d8432f"/><path d="M12 12L2.500 17.500A11 11 0 0 0 12 23z" fill="#3aa757"/><path d="M12 12L2.500 17.500 1.700 9 6 4z" fill="#d8432f"/><path d="M12 7h9.500A11 11 0 0 1 12 23l4.500-7z" fill="#f7c531"/><circle cx="12" cy="12" r="5.500" fill="#fff"/><circle cx="12" cy="12" r="4.300" fill="#3f80e8"/></svg>
        </div>
        <div class="tb-app tb-open">
            <svg class="tb-ico" viewBox="0 0 24 24"><path d="M5 1h14c2 0 3 1 3 3v20l-4-3.500H5c-2 0-3-1-3-3V4c0-2 1-3 3-3z" fill="#7289da"/><path d="M7 8c3-1.500 7-1.500 10 0 1.500 2.500 2 5 2 7-1 1-2.500 1.500-3.500 1.500L15 15.300c-2 .7-4 .7-6 0l-.5 1.200C7.500 16.500 6 16 5 15c0-2 .5-4.500 2-7z" fill="#fff"/><circle cx="9.500" cy="12.300" r="1.400" fill="#7289da"/><circle cx="14.500" cy="12.300" r="1.400" fill="#7289da"/></svg>
        </div>
        <div class="tb-app tb-open">
            <svg class="tb-ico" viewBox="0 0 24 24"><circle cx="12" cy="12" r="11" fill="#12416f"/><circle cx="16" cy="9" r="3.500" fill="none" stroke="#fff" stroke-width="1.600"/><circle cx="16" cy="9" r="1.400" fill="#fff"/><path d="M1.500 13.500L8 16.500l6-4" fill="none" stroke="#fff" stroke-width="2"/><circle cx="8.500" cy="16.500" r="2.500" fill="#fff"/></svg>
        </div>
        <div class="tb-app tb-open tb-active">
            <svg class="tb-ico" viewBox="0 0 16 16"><use href="#i-blender"/></svg>
        </div>
        <div class="tb-app tb-open">
            <svg class="tb-ico" viewBox="0 0 24 24"><rect width="24" height="24" fill="#0a0a0a"/><path d="M3 2l6 6 3-2 3 2 6-6-2 9-4 3 1 8-4-2-4 2 0-8-3-3z" fill="#8fc31f"/><path d="M9 10l3 2 3-2-3 6z" fill="#3c5f10"/></svg>
        </div>
    </div>
    <div class="tb-tray">
        <svg class="tray-ico tray-caret" viewBox="0 0 16 16"><path d="M2 11l6-6 6 6" fill="none" stroke="#fff" stroke-width="1.200"/></svg>
        <svg class="tray-ico tray-wifi" viewBox="0 0 16 16"><path d="M1 13C2 7 7 2 14 2M4 14c1-4 4-8 10-8.500M7 14.500C7.500 12 9.500 9.500 13 9" fill="none" stroke="#ccc"/><circle cx="12.500" cy="13" r="1.600" fill="#fff"/></svg>
        <svg class="tray-ico tray-vol" viewBox="0 0 16 16"><path d="M1 5.500h3l4-3.500v12L4 10.500H1z" fill="none" stroke="#fff"/><path d="M10 5.500c1 1.500 1 3.500 0 5M12.500 3.500c1.700 2.700 1.700 6.300 0 9" fill="none" stroke="#aaa"/></svg>
        <span class="tray-lang">NOB</span>
        <div class="tray-clock"><span>9:52 PM</span><span>07-Mar-20</span></div>
        <svg class="tray-note" viewBox="0 0 16 16"><path d="M0 0h16v13H9.500L8 15.500 6.500 13H0z" fill="#fff"/><path d="M3 4h10M3 6.500h10M3 9h7" stroke="#222"/></svg>
    </div>
</footer>

</body>
</html>
```
FILE: styles.css
```css
* {
    box-sizing: border-box;
}

html, body {
    margin: 0;
    padding: 0;
}

body {
    width: 1920px;
    height: 1080px;
    overflow: hidden;
    display: flex;
    flex-direction: column;
    background: #393939;
    font-family: "Open Sans", "DejaVu Sans", sans-serif;
    font-size: 11px;
    color: #000;
}

.icon-defs {
    position: absolute;
}

.ico {
    width: 16px;
    height: 16px;
    flex: none;
    display: block;
}

/* window title */
.titlebar {
    height: 23px;
    background: #fff;
    display: flex;
    align-items: center;
    padding-left: 2px;
    flex: none;
}

.title-logo {
    margin-right: 5px;
}

.title-text {
    font-size: 12px;
    letter-spacing: -.23px;
    white-space: nowrap;
}

.win-btns {
    margin-left: auto;
    display: flex;
    padding-right: 19px;
    gap: 33px;
}

.win-ico {
    width: 12px;
    height: 12px;
}

/* corner grips */
.hatch {
    position: absolute;
    width: 12px;
    height: 12px;
    background: repeating-linear-gradient(45deg, #2c2c2c 0 1px, #a0a0a0 1px 2px, transparent 2px 4px);
    pointer-events: none;
}

.hatch-tr {
    top: 0;
    right: 0;
    clip-path: polygon(100% 100%, 0 0, 100% 0);
}

.hatch-bl {
    bottom: 0;
    left: 0;
    clip-path: polygon(0 0, 100% 100%, 0 100%);
}

/* shared widgets */
.ud {
    width: 6px;
    height: 13px;
    flex: none;
    display: block;
    background:
        linear-gradient(to bottom right, transparent 50%, currentColor 50%) 0 0 / 3px 5px no-repeat,
        linear-gradient(to bottom left, transparent 50%, currentColor 50%) 3px 0 / 3px 5px no-repeat,
        linear-gradient(to top right, transparent 50%, currentColor 50%) 0 8px / 3px 5px no-repeat,
        linear-gradient(to top left, transparent 50%, currentColor 50%) 3px 8px / 3px 5px no-repeat;
    color: #c4c4c4;
}

.bt-dark {
    height: 20px;
    border: 1px solid #191919;
    border-radius: 4px;
    background: linear-gradient(#585858, #2e2e2e);
    color: #fff;
    display: flex;
    align-items: center;
    flex: none;
}

.icon-drop {
    justify-content: space-between;
    padding: 0 3px 0 2px;
}

.drop {
    padding: 0 4px 0 7px;
    justify-content: space-between;
}

.drop .ico + .drop-text {
    margin-left: 5px;
    margin-right: auto;
}

.menu {
    display: flex;
    color: #000;
    flex: none;
}

.cells {
    display: flex;
    height: 20px;
    border: 1px solid #191919;
    border-radius: 4px;
    overflow: hidden;
    flex: none;
}

.cell {
    flex: 1;
    display: flex;
    align-items: center;
    justify-content: center;
    background: linear-gradient(#a2a2a2, #7a7a7a);
    border-left: 1px solid #191919;
    min-width: 0;
}

.cell:first-child {
    border-left: 0;
}

.cell-d {
    background: linear-gradient(#585858, #2e2e2e);
    color: #fff;
}

.cell-on {
    background: linear-gradient(#6a94d6, #4675bb);
    color: #000;
}

.cell .ud {
    margin-left: 2px;
}

.stack {
    display: flex;
    flex-direction: column;
    border: 1px solid #191919;
    border-radius: 5px;
    overflow: hidden;
}

.bt, .num, .slider {
    height: 20px;
    flex: none;
    border-bottom: 1px solid #191919;
}

.bt {
    background: linear-gradient(#a4a4a4, #7b7b7b);
    padding-left: 7px;
    line-height: 20px;
    white-space: nowrap;
}

.stack > :first-child, .stack > :last-child {
    height: 19px;
}

.stack > :last-child {
    border-bottom: 0;
}

.bt-row {
    display: flex;
    height: 20px;
    flex: none;
    border-bottom: 1px solid #191919;
}

.bt-row .bt {
    flex: 1;
    height: 100%;
    border-bottom: 0;
}

.bt-row .half {
    flex: none;
    width: 110px;
    border-right: 1px solid #191919;
}

.bt-menu {
    background: linear-gradient(#585858, #2e2e2e);
    color: #fff;
    display: flex;
    align-items: center;
    justify-content: space-between;
    padding-right: 5px;
    padding-top: 1px;
}

.p-head {
    display: flex;
    align-items: center;
    font-size: 12px;
    color: #111;
    white-space: nowrap;
}

.tri-down {
    width: 0;
    height: 0;
    border: 4.500px solid transparent;
    border-top: 8px solid #1c1c1c;
    border-bottom: 0;
    margin-right: 4px;
    flex: none;
}

.tri-right {
    width: 0;
    height: 0;
    border: 4.500px solid transparent;
    border-left: 8px solid #333;
    border-right: 0;
    margin-right: 4px;
    flex: none;
}

.grip {
    width: 12px;
    height: 5px;
    margin-left: auto;
    background-image: radial-gradient(circle at 1px 1px, #383838 0 .8px, transparent 1px);
    background-size: 3px 3px;
    flex: none;
}

.num {
    background: linear-gradient(#989898, #bcbcbc);
    display: flex;
    align-items: center;
    justify-content: space-between;
    padding: 0 4px 0 5px;
    white-space: nowrap;
}

.al, .ar {
    width: 0;
    height: 0;
    flex: none;
    border: 4px solid transparent;
}

.al {
    border-right: 4px solid #6a6a6a;
    border-left: 0;
    margin-right: 4px;
}

.ar {
    border-left: 4px solid #6a6a6a;
    border-right: 0;
    margin-left: 5px;
}

.num-val {
    margin-left: auto;
}

.num-mid {
    flex: 1;
    text-align: center;
}

.num-pair {
    display: flex;
    height: 20px;
    border: 1px solid #191919;
    border-radius: 10px;
    overflow: hidden;
    flex: none;
}

.num-pair .num {
    flex: 1;
    height: 100%;
    border-bottom: 0;
    border-left: 1px solid #191919;
    min-width: 0;
}

.num-pair .num:first-child {
    border-left: 0;
}

/* top info bar */
.infobar {
    height: 27px;
    flex: none;
    position: relative;
    background: #6b6b6b;
    border-bottom: 1px solid #0c0c0c;
    display: flex;
    align-items: center;
    padding-left: 8px;
    padding-top: 2px;
}

.ib-editor {
    width: 32px;
}

.ib-menu {
    margin-left: 12px;
}

.ib-menu span {
    margin-right: 19px;
}

.ib-menu span:last-child {
    margin-right: 0;
}

.id-block {
    display: flex;
    height: 20px;
    border: 1px solid #191919;
    border-radius: 4px;
    overflow: hidden;
    flex: none;
}

.id-block .bt-dark {
    width: 32px;
    border: 0;
    border-right: 1px solid #191919;
    border-radius: 0;
    height: 100%;
}

.id-name {
    width: 119px;
    background: linear-gradient(#8e8e8e, #a6a6a6);
    padding-left: 8px;
    line-height: 18px;
}

.id-name-wide {
    width: 118px;
    padding-left: 6px;
}

.id-cell {
    width: 20px;
    background: linear-gradient(#8c8c8c, #6f6f6f);
    border-left: 1px solid #191919;
    display: flex;
    align-items: center;
    justify-content: center;
}

.id-cell .ico {
    width: 14px;
    height: 14px;
}

.ib-layout {
    margin-left: 10px;
}

.ib-scene {
    margin-left: 7px;
}

.ib-engine {
    width: 110px;
    margin-left: 15px;
}

.ib-logo {
    margin-left: 19px;
}

.ib-stats {
    margin-left: 10px;
    color: #f2f2f2;
    white-space: nowrap;
}

/* layout */
.workspace {
    flex: 1;
    min-height: 0;
    display: flex;
}

.main-col {
    width: 1665px;
    flex: none;
    display: flex;
    flex-direction: column;
}

.view3d {
    height: 871px;
    flex: none;
    display: flex;
}

/* tool shelf */
.tool-region {
    width: 276px;
    flex: none;
    display: flex;
    flex-direction: column;
    background: #6e6e6e;
}

.tool-upper {
    height: 655px;
    flex: none;
    display: flex;
}

.tabs {
    width: 20px;
    flex: none;
    background: #393939;
    display: flex;
    flex-direction: column;
    align-items: flex-end;
}

.tab {
    width: 17px;
    background: #5e5e5e;
    border-radius: 4px 0 0 4px;
    display: flex;
    align-items: center;
    justify-content: center;
    color: #161616;
    border-top: 1px solid #6a6a6a;
}

.tab span {
    writing-mode: vertical-rl;
    transform: rotate(180deg);
    white-space: nowrap;
}

.tab-on {
    background: #6e6e6e;
}

.tab-tools { height: 43px; }
.tab-create { height: 38px; margin-top: 7px; }
.tab-shading { height: 76px; margin-top: 10px; }
.tab-options { height: 47px; margin-top: 9px; }
.tab-grease { height: 75px; margin-top: 8px; }
.tab-cats { height: 34px; margin-top: 7px; }
.tab-misc { height: 33px; margin-top: 8px; }
.tab-mat { height: 77px; margin-top: 6px; }
.tab-mmd { height: 36px; margin-top: 5px; }

.tool-panels {
    width: 238px;
    flex: none;
    padding: 0 8px;
}

.t-head {
    height: 26px;
    padding: 0 0 2px 5px;
}

.t-head .grip {
    margin-right: 2px;
}

.t-first {
    margin-top: 6px;
}

.t-divider {
    height: 1px;
    background: #4c4c4c;
    margin: 7px -4px 0 -3px;
    box-shadow: 0 1px 0 #7e7e7e;
}

.t-divider-end {
    margin-top: 6px;
}

.t-label {
    height: 18px;
    line-height: 18px;
    margin-top: 7px;
    padding-left: 8px;
}

.t-label-first {
    margin-top: 8px;
}

.tool-scroll {
    width: 13px;
    flex: none;
    margin: 5px 0 4px 1px;
    background: #5a5a5a;
    border-radius: 6px;
}

.tool-thumb {
    height: 606px;
    border-radius: 6px;
    background: linear-gradient(90deg, #8f8f8f, #9c9c9c 50%, #848484);
    border: 1px solid #4e4e4e;
}

.op-panel {
    flex: 1;
    background: #6f6f6f;
    border-top: 1px solid #7d7d7d;
    border-right: 1px solid #5b5b5b;
    padding: 0 8px;
}

.op-head {
    height: 24px;
    padding-left: 5px;
}

.op-head .grip {
    margin-right: 2px;
}

.op-label {
    margin-top: 9px;
    height: 18px;
    line-height: 18px;
    padding-left: 8px;
}

.op-toggle {
    width: 260px;
}

/* 3d viewport */
.viewport {
    flex: 1;
    position: relative;
    background: #393939;
    overflow: hidden;
}

.scene-svg {
    position: absolute;
    left: 0;
    top: 0;
    display: block;
}

.faces path {
    fill: #fff;
}

.edges path {
    fill: none;
    stroke: #000;
    stroke-width: 1;
}

.back-edges path {
    fill: none;
    stroke: #a6a6a6;
    stroke-width: 1;
}

.selected path {
    fill: none;
    stroke: #d98a1a;
    stroke-width: 1.200;
}

.verts path {
    fill: #000;
}

.back-verts path {
    fill: #6a6a6a;
}

.gizmo-ring {
    fill: none;
    stroke: #fff;
    stroke-width: 1;
}

.gizmo-b, .axis-b {
    stroke: #0000d8;
    stroke-width: 1.200;
}

.gizmo-g, .axis-g {
    stroke: #00d800;
    stroke-width: 1.200;
}

.gizmo-r, .axis-r {
    stroke: #d80000;
    stroke-width: 1.200;
}

.axis-b, .axis-g, .axis-r {
    stroke-width: 2;
}

.gizmo-fb, .axis-tb { fill: #0000d8; }
.gizmo-fg, .axis-tg { fill: #00c800; }
.gizmo-fr, .axis-tr { fill: #d80000; }

.gizmo-dot {
    fill: #fff;
}

.axis-tb, .axis-tg, .axis-tr {
    font-family: "Open Sans", sans-serif;
    font-size: 13px;
}

.view-name, .view-obj {
    position: absolute;
    color: #f0f0f0;
    font-size: 11px;
    white-space: nowrap;
}

.view-name {
    left: 20px;
    top: 9px;
}

.view-obj {
    left: 70px;
    top: 849px;
}

.view-plus {
    position: absolute;
    right: 2px;
    top: 10px;
    color: #111;
    font-size: 14px;
    line-height: 14px;
}

.viewport .hatch-tr {
    width: 10px;
    height: 10px;
}

/* 3d view header */
.view-header, .tl-footer {
    display: flex;
    align-items: center;
    flex: none;
    position: relative;
}

.view-header {
    height: 26px;
    background: #727272;
    border-top: 1px solid #5d5d5d;
    padding-left: 9px;
}

.h-editor {
    width: 32px;
}

.h-menu {
    margin-left: 12px;
}

.h-menu span:nth-child(1) { width: 45px; }
.h-menu span:nth-child(2) { width: 51px; }
.h-menu span:nth-child(3) { width: 40px; }
.h-menu span:nth-child(4) { width: 39px; }

.h-mode { width: 97px; padding-left: 4px; }
.h-pivot { width: 32px; margin-left: 6px; }
.h-shade { width: 32px; margin-left: 6px; }
.h-manip { width: 152px; margin-left: 4px; }
.h-manip .cell { flex: none; width: 19px; }
.h-manip .cell-axes { width: 21px; }
.h-manip .cell-global { flex: 1; justify-content: space-between; padding: 0 4px 0 7px; }
.h-select { width: 60px; margin-left: 5px; }
.h-occl { width: 20px; margin-left: 6px; }
.h-prop { width: 32px; margin-left: 5px; }
.h-snap { width: 72px; margin-left: 4px; }
.h-snap .cell-inc { flex: none; width: 32px; }
.h-parent { width: 20px; margin-left: 5px; }
.h-gl { width: 37px; margin-left: 7px; }

/* timeline */
.timeline {
    height: 66px;
    flex: none;
    background: #727272;
    border-top: 2px solid #0c0c0c;
    display: flex;
    flex-direction: column;
}

.tl-grid {
    height: 49px;
    flex: none;
    position: relative;
    background-color: #727272;
    background-image:
        linear-gradient(90deg, #5a5a5a 1px, transparent 1px),
        linear-gradient(90deg, #676767 1px, transparent 1px);
    background-size: 44.830px 100%, 22.415px 100%;
    background-position: 4.800px 0, 4.800px 0;
}

.tl-out {
    position: absolute;
    top: 0;
    bottom: 0;
    background: rgba(0, 0, 0, .42);
}

.tl-before {
    left: 0;
    width: 318px;
    border-right: 1px solid #2a2a2a;
}

.tl-after {
    left: 1443px;
    right: 0;
}

.tl-frame {
    position: absolute;
    left: 335px;
    top: 0;
    bottom: 0;
    width: 2px;
    background: #5fb233;
}

.ruler {
    height: 13px;
    flex: none;
    display: flex;
    position: relative;
    padding-left: 21px;
    margin: 0 2px 0 3px;
    border: 1px solid #4a4a4a;
    border-radius: 7px;
    background: linear-gradient(#8f8f8f, #a6a6a6);
    overflow: hidden;
}

.ruler::before, .ruler::after {
    content: "";
    position: absolute;
    top: 1px;
    width: 9px;
    height: 9px;
    border-radius: 50%;
    background: #666;
    border: 1px solid #555;
}

.ruler::before {
    left: 1px;
}

.ruler::after {
    right: 1px;
}

.ruler span {
    flex: 0 0 44.830px;
    text-align: center;
    line-height: 11px;
    font-size: 11px;
}

/* timeline footer */
.tl-footer {
    height: 28px;
    background: #727272;
    border-top: 1px solid #5d5d5d;
    padding-left: 9px;
}

.f-menu {
    margin-left: 12px;
}

.f-menu span:nth-child(1) { width: 45px; }
.f-menu span:nth-child(2) { width: 55px; }
.f-menu span:nth-child(3) { width: 52px; }
.f-menu span:nth-child(4) { width: 58px; }

.f-preview { width: 39px; }
.f-range { width: 226px; margin-left: 7px; }
.f-range .num-start { flex: none; width: 116px; }
.f-current { width: 89px; margin-left: 7px; }
.f-transport { width: 119px; margin-left: 16px; }
.f-sync { width: 115px; margin-left: 6px; }
.f-rec { width: 20px; margin-left: 16px; }
.f-keytype { width: 31px; margin-left: 5px; }
.f-keys { width: 169px; margin-left: 7px; }
.f-keys .cell { flex: none; width: 20px; }
.f-keys .cell-keyset { width: 129px; justify-content: flex-start; padding-left: 2px; background: linear-gradient(#999, #bcbcbc); }

/* right column */
.side-col {
    width: 255px;
    flex: none;
    display: flex;
    flex-direction: column;
    background: #727272;
    border-left: 1px solid #0c0c0c;
}

.outliner {
    height: 172px;
    flex: none;
    display: flex;
    flex-direction: column;
    border-bottom: 1px solid #0c0c0c;
}

.out-head {
    height: 26px;
    flex: none;
    display: flex;
    align-items: center;
    position: relative;
    background: #727272;
    padding-left: 9px;
    padding-top: 1px;
    border-bottom: 1px solid #5d5d5d;
}

.out-head .bt-dark {
    width: 32px;
}

.out-menu {
    margin-left: 12px;
}

.out-menu span:first-child {
    width: 45px;
}

.out-menu span:last-child {
    width: 47px;
}

.out-head .out-scenes {
    width: 110px;
    border-radius: 4px 0 0 4px;
    border-right: 0;
    padding-left: 8px;
}

.out-list {
    height: 127px;
    flex: none;
    position: relative;
    background: repeating-linear-gradient(#727272 0 20px, #6d6d6d 20px 40px);
    padding-top: 1px;
    overflow: hidden;
}

.out-cols {
    position: absolute;
    top: 0;
    bottom: 0;
    left: 194px;
    display: flex;
}

.out-cols i {
    width: 20px;
    border-left: 1px solid #5c5c5c;
}

.out-tree {
    position: absolute;
    left: 30px;
    top: 17px;
    width: 1px;
    height: 54px;
    background: #222;
}

.out-row {
    height: 20px;
    display: flex;
    align-items: center;
    position: relative;
    padding-left: 4px;
    color: #000;
}

.out-row-sel {
    width: 194px;
    background: #7d878a;
}

.out-row-2 {
    padding-left: 26px;
}

.out-row-3 {
    padding-left: 43px;
}

.out-row .ico {
    margin-right: 3px;
}

.out-row .ico-ring, .out-row .ico-ring-o, .out-row .ico-ring-g {
    margin-right: 1px;
}

.exp {
    width: 10px;
    height: 10px;
    border-radius: 50%;
    background: #f2f2f2;
    border: 1px solid #111;
    margin-right: 7px;
    flex: none;
    position: relative;
}

.exp::after {
    content: "";
    position: absolute;
    left: 100%;
    top: 3px;
    width: 7px;
    height: 1px;
    background: #222;
}

.out-row-sel .exp {
    margin-right: 8px;
    margin-left: 2px;
}

.out-row-2 .exp {
    background: linear-gradient(#111, #111) center / 6px 1px no-repeat, linear-gradient(#111, #111) center / 1px 6px no-repeat, #f2f2f2;
}

.exp-minus {
    background: linear-gradient(#111, #111) center / 6px 1px no-repeat, #f2f2f2;
}

.ico-ring, .ico-ring-o, .ico-ring-g {
    border-radius: 50%;
    width: 18px;
    height: 18px;
    padding: 1px;
}

.ico-ring {
    background: rgba(215, 215, 215, .45);
}

.ico-ring-o {
    background: #b88a53;
}

.ico-ring-g {
    background: #a0a0a0;
}

.out-active {
    color: #fff;
}

.out-sep {
    width: 2px;
    height: 12px;
    background: #3a3a3a;
    margin: 0 8px 0 9px;
    flex: none;
}

.out-restrict {
    position: absolute;
    left: 196px;
    top: 2px;
    display: flex;
    gap: 4px;
}

.out-restrict .ico {
    margin: 0;
}

.out-scroll {
    flex: 1;
    position: relative;
    padding: 1px 4px 1px 4px;
}

.out-scroll .hatch-bl {
    width: 10px;
    height: 10px;
}

.out-thumb {
    height: 14px;
    border-radius: 7px;
    background:
        linear-gradient(90deg, #a0a0a0 0, #a0a0a0 206px, #5a5a5a 206px);
    border: 1px solid #4e4e4e;
}

.props {
    flex: 1;
    min-height: 0;
    position: relative;
    overflow: hidden;
    display: flex;
    flex-direction: column;
}

.props > .hatch-bl {
    bottom: auto;
    top: 786px;
}

.props-head {
    height: 25px;
    flex: none;
    display: flex;
    align-items: center;
    position: relative;
    padding-left: 9px;
    border-bottom: 1px solid #5d5d5d;
}

.props-head .bt-dark {
    width: 32px;
}

.ctx-tabs {
    display: flex;
    margin-left: 7px;
    flex: none;
    height: 20px;
    border: 1px solid #191919;
    border-radius: 4px 0 0 4px;
    border-right: 0;
}

.ctx-tabs .cell {
    flex: none;
    width: 20px;
    margin-left: 0;
}

.ctx-tabs .cell-on {
    border-radius: 3px 0 0 3px;
}

.ctx-tabs .cell .ico {
    width: 15px;
    height: 15px;
}

.props-main {
    flex: 1;
    min-height: 0;
    display: flex;
}

.props-body {
    width: 238px;
    flex: none;
    padding: 0 9px 0 8px;
}

.props-scroll {
    width: 13px;
    flex: none;
    margin: 5px 0 0 0;
    background: #5a5a5a;
    border-radius: 6px;
    height: 760px;
}

.props-thumb {
    height: 750px;
    background: linear-gradient(90deg, #8f8f8f, #9c9c9c 50%, #848484);
    border: 1px solid #4e4e4e;
    border-radius: 6px;
}

.ctx {
    height: 36px;
    padding: 4px 0 0 0;
    display: flex;
    align-items: center;
    gap: 5px;
}

.ctx span {
    margin-left: 2px;
}

.pr-head {
    height: 24px;
    padding: 1px 6px 0 5px;
    color: #1c1c1c;
    border-top: 1px solid #4c4c4c;
    margin: 0 -3px;
}

.pr-head .tri-down, .pr-head .tri-right {
    margin-left: 3px;
}

.pr-head .box {
    margin-right: 6px;
}

.render-btns {
    display: flex;
    margin-top: 9px;
    height: 19px;
    border: 1px solid #191919;
    border-radius: 4px;
    overflow: hidden;
}

.rb {
    flex: 1;
    display: flex;
    align-items: center;
    background: linear-gradient(#a2a2a2, #7a7a7a);
    border-left: 1px solid #191919;
    padding-left: 3px;
    white-space: nowrap;
}

.rb:first-child {
    border-left: 0;
    flex: none;
    width: 72px;
}

.rb:nth-child(2) {
    flex: none;
    width: 74px;
}

.rb span {
    flex: 1;
    text-align: center;
    min-width: 0;
}

.lbl {
    white-space: nowrap;
    color: #000;
}

.display-row {
    display: flex;
    align-items: center;
    margin-top: 7px;
    height: 19px;
    padding-left: 7px;
    margin-bottom: 7px;
}

.display-drop {
    margin-left: auto;
    width: 142px;
    display: flex;
    height: 100%;
}

.display-drop .bt-dark {
    flex: 1;
    height: 100%;
    border-radius: 4px 0 0 4px;
}

.end-cell {
    width: 20px;
    flex: none;
    background: linear-gradient(#a2a2a2, #7a7a7a);
    border: 1px solid #191919;
    border-left: 0;
    display: flex;
    align-items: center;
    justify-content: center;
}

.display-drop .end-cell, .presets .end-cell:last-child {
    border-radius: 0 4px 4px 0;
}

.end-cell .ico {
    width: 14px;
    height: 14px;
}

.presets {
    display: flex;
    margin-top: 10px;
    height: 19px;
}

.presets .bt-dark {
    flex: 1;
    height: 100%;
    border-radius: 4px 0 0 4px;
}

.dim-grid {
    display: grid;
    grid-template-columns: 105px 106px;
    column-gap: 10px;
    margin-bottom: 7px;
}

.lbl-row {
    height: 18px;
    line-height: 18px;
    margin-top: 7px;
    padding-left: 7px;
}

.lbl-gap {
    margin-top: 2px;
}

.dim-grid .stack {
    border-radius: 9px;
}

.slider {
    text-align: center;
    line-height: 19px;
}

.slider-half {
    background:
        linear-gradient(#5f5f5f, #8c8c8c) 0 0 / 50% 100% no-repeat,
        linear-gradient(#989898, #bcbcbc);
}

.check-pair {
    display: flex;
    margin-top: 3px;
    height: 20px;
    padding-left: 2px;
}

.chk {
    display: flex;
    align-items: center;
    gap: 8px;
    white-space: nowrap;
    color: #000;
}

.check-pair .chk:first-child {
    width: 57px;
}

.chk-off {
    color: #5a5a5a;
}

.chk-off .box {
    opacity: .45;
}

.chk-lit {
    color: #fff;
}

.box {
    width: 14px;
    height: 14px;
    flex: none;
    display: block;
    border: 1px solid #191919;
    border-radius: 4px;
    background: linear-gradient(#4f4f4f, #3b3b3b);
    position: relative;
}

.box-on::after {
    content: "";
    position: absolute;
    left: 2.500px;
    top: -1px;
    width: 9px;
    height: 4px;
    border-left: 2px solid #fff;
    border-bottom: 2px solid #fff;
    transform: rotate(-50deg);
    box-sizing: content-box;
}

.drop-block {
    height: 19px;
    padding-right: 4px;
}

.lbl-remap {
    height: 21px;
    line-height: 21px;
    padding-left: 7px;
}

.remap .num {
    padding: 0 3px 0 4px;
}

.aa-grid {
    display: grid;
    grid-template-columns: 105px 106px;
    column-gap: 10px;
    row-gap: 3px;
    margin-top: 8px;
    margin-bottom: 7px;
}

.aa-samples {
    height: 20px;
}

.aa-grid .drop-block {
    height: 20px;
}

.aa-grid .chk {
    padding-left: 2px;
}

.num-round {
    height: 19px;
    border: 1px solid #191919;
    border-radius: 10px;
}

.path-row {
    display: flex;
    margin-top: 9px;
    height: 20px;
}

.path-field {
    flex: 1;
    background: linear-gradient(#989898, #bcbcbc);
    border: 1px solid #191919;
    border-radius: 4px 0 0 4px;
    padding-left: 6px;
    line-height: 19px;
}

.path-row .end-cell {
    border-radius: 0 4px 4px 0;
}

.out-checks {
    display: grid;
    grid-template-columns: 115px 106px;
    grid-auto-rows: 22px;
    margin-top: 5px;
    padding-left: 2px;
}

.format-row {
    display: grid;
    grid-template-columns: 105px 106px;
    column-gap: 10px;
    margin-top: 3px;
}

.format-row .drop {
    padding-left: 5px;
}

.color-modes .cell:first-child {
    flex: none;
    width: 34px;
}

.color-modes .cell:last-child {
    flex: none;
    width: 36px;
}

.depth-row {
    display: flex;
    align-items: center;
    margin-top: 3px;
    height: 19px;
    padding-left: 7px;
}

.depth-cells {
    margin-left: auto;
    width: 141px;
    height: 19px;
}

.compress {
    display: flex;
    justify-content: space-between;
    height: 19px;
    margin-top: 3px;
    border: 1px solid #191919;
    border-radius: 10px;
    padding: 0 15px 0 13px;
    line-height: 17px;
    background:
        linear-gradient(#5f5f5f, #8c8c8c) 0 0 / 15% 100% no-repeat,
        linear-gradient(#989898, #bcbcbc);
}

.pr-last {
    margin-top: 9px;
}

/* windows taskbar */
.taskbar {
    height: 40px;
    flex: none;
    display: flex;
    align-items: center;
    position: relative;
    background: linear-gradient(90deg, #1a2324, #1e2320 45%, #2e2820 62%, #2a2419);
    color: #fff;
}

.tb-start {
    width: 16px;
    height: 16px;
    margin: 0 16px;
    flex: none;
}

.tb-search {
    width: 344px;
    height: 40px;
    flex: none;
    background: #f2f2f2;
    color: #222;
    display: flex;
    align-items: center;
    font-size: 14.500px;
    padding-left: 11px;
    border: 1px solid #9a9a9a;
    border-width: 1px 0 0 1px;
}

.tb-lens {
    width: 16px;
    height: 16px;
    margin-right: 13px;
}

.tb-apps {
    display: flex;
    margin-left: 3px;
}

.tb-app {
    width: 49px;
    height: 40px;
    display: flex;
    align-items: center;
    justify-content: center;
    position: relative;
}

.tb-open::after {
    content: "";
    position: absolute;
    left: 4px;
    right: 4px;
    bottom: 0;
    height: 2px;
    background: #76b9ed;
}

.tb-active {
    background: #4b4b48;
}

.tb-ico {
    width: 24px;
    height: 24px;
}

.tb-tray {
    margin-left: auto;
    display: flex;
    align-items: center;
    padding-right: 25px;
    font-size: 12px;
}

.tray-ico {
    width: 16px;
    height: 16px;
    flex: none;
}

.tray-caret { margin-right: 9px; }
.tray-wifi { margin-right: 5px; }
.tray-vol { margin-right: 11px; }

.tray-lang {
    width: 34px;
    font-size: 12px;
}

.tray-clock {
    display: flex;
    flex-direction: column;
    align-items: center;
    width: 60px;
    margin-right: 15px;
    line-height: 18px;
}

.tray-note {
    width: 16px;
    height: 16px;
}
```
